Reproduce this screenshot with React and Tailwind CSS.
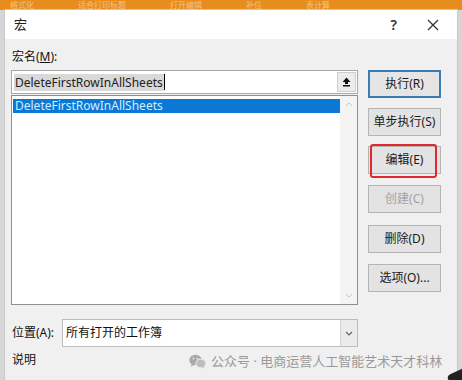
import React from "react";

const font = { fontFamily: '"Noto Sans", "Noto Sans CJK SC", sans-serif' };

function Btn({ children, primary, disabled, marked }) {
  return (
    <div className="relative">
      <div
        className={`flex h-[28px] w-[73px] items-center justify-center text-[12px] ${
          primary
            ? "border-2 border-[#3b7db3] bg-[#e5e5e5]"
            : "border border-[#b4b4b4] bg-[#e3e3e3]"
        } ${disabled ? "text-[#a2a2a2]" : "text-[#1a1a1a]"}`}
      >
        {children}
      </div>
      {marked ? (
        <span className="absolute left-[2px] top-[-2px] h-[34px] w-[67px] rounded-[3px] border-2 border-[#e2282c]" />
      ) : null}
    </div>
  );
}

function WeChat() {
  return (
    <svg width="17" height="15" viewBox="0 0 17 15">
      <ellipse cx="6.5" cy="6" rx="6.2" ry="5.2" fill="#a8a8a8" />
      <path d="M2.5 10.2 L2 12.8 L5 11" fill="#a8a8a8" />
      <ellipse cx="11.8" cy="9.4" rx="5" ry="4.3" fill="#bdbdbd" stroke="#f0f0f0" strokeWidth="1" />
      <path d="M14.8 12.6 L15.5 14.6 L13 13.2" fill="#bdbdbd" />
      <circle cx="4.4" cy="4.6" r="0.9" fill="#f0f0f0" />
      <circle cx="8.4" cy="4.6" r="0.9" fill="#f0f0f0" />
    </svg>
  );
}

export default function App() {
  return (
    <div className="relative h-[380px] w-[462px] overflow-hidden bg-[#d6d6d6]" style={font}>
      <div className="flex h-[10px] items-center gap-[44px] overflow-hidden bg-[#e78d1d] pl-[10px] text-[8px] leading-[10px] text-[#f4c184]">
        <span>格式化</span>
        <span>适合打印标题</span>
        <span>打开编辑</span>
        <span>补位</span>
        <span>表计算</span>
      </div>

      <div className="mx-[5px] flex h-[370px] flex-col bg-[#f0f0f0] shadow-[0_0_0_1px_#c8c8c8]">
        <div className="flex h-[29px] items-center bg-white pl-[9px] pr-[18px] text-[13px] text-[#222]">
          <span className="flex-1">宏</span>
          <span className="mr-[30px] text-[14px] font-semibold text-[#333]">?</span>
          <svg width="12" height="12" viewBox="0 0 12 12">
            <path d="M1 1 L11 11 M11 1 L1 11" stroke="#333" strokeWidth="1.3" />
          </svg>
        </div>

        <div className="flex flex-col px-[6px] pt-[10px]">
          <div className="pl-[1px] text-[12px] leading-[16px] text-[#111]">
            宏名(<span className="underline">M</span>):
          </div>

          <div className="mt-[5px] flex gap-[10px]">
            <div className="flex w-[347px] flex-col">
              <div className="flex h-[24px] items-center border border-[#a8a8a8] bg-white pl-[2px] pr-[1px]">
                <span className="bg-[#d9d9d9] px-[1px] text-[12px] leading-[17px] text-[#222]">
                  DeleteFirstRowInAllSheets
                </span>
                <span className="h-[16px] w-px bg-black" />
                <span className="flex-1" />
                <div className="flex h-[20px] w-[19px] items-center justify-center border border-[#cfcfcf] bg-[#ececec]">
                  <svg width="9" height="10" viewBox="0 0 9 10">
                    <path d="M4.5 0.5 L8.5 5 L6 5 L6 7 L3 7 L3 5 L0.5 5 Z" fill="#111" />
                    <rect x="1" y="8" width="7" height="1.5" fill="#111" />
                  </svg>
                </div>
              </div>

              <div className="mt-[1px] flex h-[210px] border border-[#8f8f8f] bg-white">
                <div className="flex-1 pl-[1px] pt-[3px]">
                  <div className="bg-[#0a78d5] pl-[2px] text-[12px] leading-[14px] text-[#d6ecff]">
                    DeleteFirstRowInAllSheets
                  </div>
                </div>
                <div className="flex w-[17px] flex-col items-center justify-between bg-[#f4f4f4] py-[6px]">
                  <svg width="8" height="5" viewBox="0 0 8 5">
                    <path d="M1 4 L4 1 L7 4" stroke="#c4c4c4" fill="none" />
                  </svg>
                  <svg width="8" height="5" viewBox="0 0 8 5">
                    <path d="M1 1 L4 4 L7 1" stroke="#c4c4c4" fill="none" />
                  </svg>
                </div>
              </div>
            </div>

            <div className="flex flex-col gap-[10px]">
              <Btn primary>执行(R)</Btn>
              <Btn>单步执行(S)</Btn>
              <Btn marked>编辑(E)</Btn>
              <div className="mt-[1px]">
                <Btn disabled>创建(C)</Btn>
              </div>
              <div className="mt-[2px]">
                <Btn>删除(D)</Btn>
              </div>
              <div className="mt-[1px]">
                <Btn>选项(O)...</Btn>
              </div>
            </div>
          </div>

          <div className="mt-[14px] flex items-center">
            <span className="w-[51px] pl-[1px] text-[12px] text-[#111]">位置(A):</span>
            <div className="flex h-[28px] w-[296px] items-center border border-[#bdbdbd] bg-white">
              <span className="flex-1 pl-[3px] text-[12px] text-[#111]">所有打开的工作簿</span>
              <div className="flex h-full w-[17px] items-center justify-center border-l border-[#d4d4d4] bg-[#ebebeb]">
                <svg width="8" height="5" viewBox="0 0 8 5">
                  <path d="M1 1 L4 4 L7 1" stroke="#666" fill="none" strokeWidth="1.2" />
                </svg>
              </div>
            </div>
          </div>

          <div className="mt-[4px] pl-[1px] text-[12px] text-[#111]">说明</div>
        </div>
      </div>

      <div className="absolute left-[189px] top-[352px] flex items-center gap-[5px] text-[13px] text-[#9a9a9a]">
        <WeChat />
        <span>公众号 · 电商运营人工智能艺术天才科林</span>
      </div>
      <div className="absolute left-[449px] top-[371px] h-[16px] w-[20px] rotate-[-25deg] rounded-[4px] bg-[#222]" />
    </div>
  );
}
